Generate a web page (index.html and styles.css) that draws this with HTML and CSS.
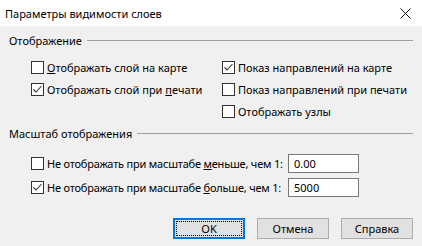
FILE: index.html
```
<!DOCTYPE html>
<html lang="ru">
<head>
    <meta charset="UTF-8">
    <title>Параметры видимости слоев</title>
    <link rel="stylesheet" href="styles.css">
</head>
<body>
    <div class="dialog">
        <div class="titlebar">
            <span class="title">Параметры видимости слоев</span>
            <svg class="close" width="11" height="11" viewBox="0 0 11 11">
                <path d="M0.5 0.5 L10.5 10.5 M10.5 0.5 L0.5 10.5" stroke="#111" stroke-width="1"/>
            </svg>
        </div>

        <div class="content">
            <div class="group-title">
                <span>Отображение</span>
                <div class="line"></div>
            </div>

            <div class="options">
                <label class="check"><span class="box"></span><span><u>О</u>тображать слой на карте</span></label>
                <label class="check"><span class="box"><svg viewBox="0 0 11 11"><polyline points="1.5,5.5 4,8 9.5,2" /></svg></span><span>Показ направлений на карте</span></label>
                <label class="check"><span class="box"><svg viewBox="0 0 11 11"><polyline points="1.5,5.5 4,8 9.5,2" /></svg></span><span>Отображать слой при <u>п</u>ечати</span></label>
                <label class="check"><span class="box"></span><span>Показ направлений при печати</span></label>
                <span></span>
                <label class="check"><span class="box"></span><span>Отображать узлы</span></label>
            </div>

            <div class="group-title second">
                <span>Масштаб отображения</span>
                <div class="line"></div>
            </div>

            <div class="scale-rows">
                <div class="scale-row">
                    <label class="check"><span class="box"></span><span class="scale-text">Не отображать при масштабе <u>м</u>еньше, чем 1:</span></label>
                    <input type="text" class="field" value="0.00">
                </div>
                <div class="scale-row">
                    <label class="check"><span class="box"><svg viewBox="0 0 11 11"><polyline points="1.5,5.5 4,8 9.5,2" /></svg></span><span class="scale-text">Не отображать при масштабе <u>б</u>ольше, чем 1:</span></label>
                    <input type="text" class="field" value="5000">
                </div>
            </div>

            <div class="buttons">
                <button class="btn default"><span>OK</span></button>
                <button class="btn">Отмена</button>
                <button class="btn">Справка</button>
            </div>
        </div>
    </div>
</body>
</html>
```

FILE: styles.css
```
body {
    margin: 0;
    font-family: "Noto Sans", Arial, sans-serif;
    font-size: 11px;
    color: #000;
    background-color: #f0f0f0;
}

.dialog {
    width: 422px;
    height: 246px;
    overflow: hidden;
}

.titlebar {
    height: 26px;
    background: white;
    display: flex;
    align-items: center;
    justify-content: space-between;
    padding: 0 11px 0 5px;
}

.title {
    font-size: 11px;
}

.content {
    padding: 0 9px 0 8px;
}

.group-title {
    display: flex;
    align-items: center;
    height: 16px;
    margin-top: 6px;
    color: #000;
}

.group-title span {
    padding: 0 5px 0 1px;
}

.group-title .line {
    flex: 1;
    height: 1px;
    background-color: #a0a0a0;
}

.group-title.second {
    margin-top: 3px;
}

.options {
    display: grid;
    grid-template-columns: 191px 1fr;
    grid-auto-rows: 22px;
    padding: 8px 0 0 23px;
}

.check {
    display: flex;
    align-items: center;
    white-space: nowrap;
}

.box {
    width: 11px;
    height: 11px;
    border: 1px solid #333;
    background: white;
    margin-right: 3px;
    flex: none;
}

.box svg {
    display: block;
    width: 11px;
    height: 11px;
    fill: none;
    stroke: #333;
    stroke-width: 1.1;
}

.scale-rows {
    padding: 13px 0 0 23px;
}

.scale-row {
    display: flex;
    align-items: center;
    justify-content: space-between;
    height: 19px;
    margin-bottom: 5px;
    padding-right: 54px;
}

.scale-text {
    letter-spacing: -0.2px;
}

.field {
    width: 71px;
    height: 19px;
    box-sizing: border-box;
    border: 1px solid #7a7a7a;
    background: white;
    font-family: "Noto Sans", Arial, sans-serif;
    font-size: 11px;
    padding: 0 5px;
    margin: 0;
}

.buttons {
    display: flex;
    justify-content: flex-end;
    gap: 12px;
    margin-top: 21px;
}

.btn {
    width: 72px;
    height: 21px;
    background-color: #e1e1e1;
    border: 1px solid #adadad;
    font-family: "Noto Sans", Arial, sans-serif;
    font-size: 11px;
    color: #000;
    padding: 0;
}

.btn.default {
    border: 2px solid #0078d7;
    display: flex;
    align-items: center;
    justify-content: center;
}

.btn.default span {
    display: block;
    width: 64px;
    height: 13px;
    line-height: 13px;
    border: 1px dotted #000;
}
```
